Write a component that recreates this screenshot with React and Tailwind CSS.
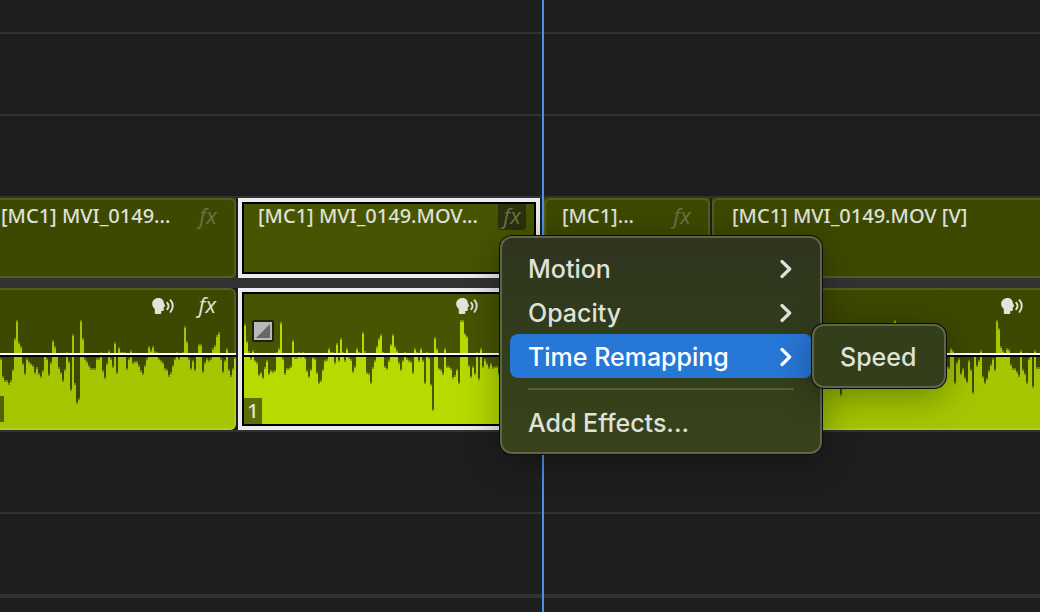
import React from "react";

const WAVE_A = [
  358, 376, 380, 380, 383, 380, 369, 338, 320, 342, 346, 363, 373, 358, 361, 363, 365, 372, 367, 373,
  376, 370, 355, 358, 374, 362, 340, 346, 355, 367, 372, 380, 369, 352, 361, 389, 334, 383, 402, 398,
  320, 338, 358, 361, 365, 368, 368, 368, 358, 358, 352, 370, 377, 363, 350, 358, 366, 342, 372, 347,
  352, 352, 352, 368, 358, 350, 362, 361, 361, 365, 370, 373, 365, 358, 346, 350, 346, 351, 352, 358,
  360, 362, 368, 369, 375, 372, 365, 358, 352, 358, 355, 352, 326, 341, 358, 368, 360, 369, 355, 344,
  344, 371, 362, 358, 360, 358, 348, 345, 335, 332, 358, 371, 360, 348, 369, 375, 368, 357,
];

const WAVE_B = [
  324, 341, 351, 358, 350, 360, 362, 374, 372, 377, 367, 360, 373, 370, 371, 370, 352, 348, 322, 358,
  373, 368, 368, 366, 340, 357, 357, 352, 356, 352, 357, 370, 376, 369, 357, 358, 372, 382, 380, 369,
  360, 359, 348, 352, 352, 362, 343, 360, 338, 352, 360, 348, 357, 359, 371, 366, 348, 352, 353, 332,
  351, 372, 373, 382, 367, 360, 346, 338, 334, 352, 366, 368, 360, 344, 334, 346, 350, 362, 369, 360,
  352, 358, 360, 361, 372, 348, 352, 360, 348, 360, 382, 352, 357, 384, 409, 337, 348, 368, 369, 373,
  348, 366, 366, 368, 377, 375, 369, 382, 320, 320, 333, 336, 365, 376, 366, 373, 352, 378, 348, 366,
  359, 363, 367, 363, 367, 366, 366, 373, 362, 360, 352, 358, 366, 370, 360, 352, 349, 358, 364, 371,
  360, 352, 358, 364, 362,
];

const WAVE_C = [
  360, 366, 352, 348, 360, 370, 365, 358, 352, 362, 368, 374, 361, 350, 345, 358, 366, 372, 360, 352,
  358, 366, 362, 350, 340, 356, 364, 370, 360, 352, 358, 366, 371, 362, 350, 346, 358, 368, 360, 352,
  358, 364, 370, 361, 352, 348, 358, 366, 372, 360, 350, 345, 352, 360, 366, 370, 361, 352, 358, 366,
  362, 350, 342, 356, 364, 370, 360, 352, 358, 366, 371, 362, 350, 346, 358, 368, 360, 352, 358, 364,
  370, 361, 352,
];

const WAVE_D = [
  360, 366, 352, 348, 360, 370, 365, 358, 352, 362, 368, 374, 361, 350, 345, 358, 366, 372, 360, 352,
  358, 366, 362, 350, 340, 356, 364, 370, 360, 352, 358, 366, 371, 362, 350, 346, 358, 368, 360, 352,
  358, 364, 370, 361, 352, 348, 358, 366, 372, 360, 350, 345, 352, 360, 366, 370, 361, 352, 358, 366,
  362, 350, 342, 356, 394, 370, 360, 352, 358, 366, 371, 362, 350, 346, 358, 368, 360, 352, 358, 364,
  370, 361, 352, 348, 360, 370, 365, 358, 352, 362, 368, 320, 361, 350, 345, 358, 366, 372, 360, 352,
  358, 366, 362, 350, 346, 356, 364, 370, 360, 352, 358, 366, 371, 362, 350, 356, 358, 366, 367, 348,
  350, 382, 362, 358, 373, 368, 377, 381, 360, 369, 392, 355, 365, 360, 350, 376, 382, 378, 370, 364,
  358, 369, 320, 328, 346, 350, 353, 348, 349, 364, 368, 368, 371, 375, 350, 369, 373, 382, 358, 355,
  386, 350, 367, 367,
];

const TRACK_TOP = 288;
const TRACK_HEIGHT = 142;

function outline(levels, drop) {
  const steps = levels
    .map((y, i) => `L${i * 2} ${y - TRACK_TOP + drop}H${i * 2 + 2}`)
    .join("");
  return `M0 ${TRACK_HEIGHT}${steps}V${TRACK_HEIGHT}Z`;
}

function Waveform({ levels, selected }) {
  return (
    <svg
      className="absolute inset-0 h-full w-full"
      viewBox={`0 0 ${levels.length * 2} ${TRACK_HEIGHT}`}
      preserveAspectRatio="none"
      shapeRendering="crispEdges"
      aria-hidden="true"
    >
      <path d={outline(levels, 0)} fill={selected ? "#7d9600" : "#708700"} />
      <path d={outline(levels, 2)} fill={selected ? "#b7da00" : "#a5c702"} />
    </svg>
  );
}

function SpeakingHead() {
  return (
    <svg width="23" height="18" viewBox="0 0 23 18" role="img" aria-label="Dialogue">
      <path
        d="M6.600 1C2.900 1 .2 3.500.2 6.700c0 2.200.9 3.500 2 4.600.5.500.6 1 .6 1.800v3c0 .6.300.9.900.9h4.700c.6 0 .9-.3.900-.9v-2h1c1 0 1.500-.5 1.500-1.300v-2.300c0-.4.200-.6.600-.7l.5-.2c.4-.2.500-.5.300-.9L11.900 6.300C11.800 3.200 9.700 1 6.600 1Z"
        fill="#e2e4da"
      />
      <g fill="none" stroke="#e2e4da" strokeWidth="1.900" strokeLinecap="round">
        <path d="M15.300 5.800c1.500 1.900 1.500 4.500 0 6.400" />
        <path d="M18.500 3.200c3 3.400 3 8.200 0 11.600" />
      </g>
    </svg>
  );
}

function Fx({ dim }) {
  return (
    <span
      className={`pb-1 font-['Open_Sans','Noto_Sans',sans-serif] text-[22px] leading-5 italic ${
        dim ? "text-[#6a7249]" : "text-[#e2e4da]"
      }`}
    >
      fx
    </span>
  );
}

const frames = {
  left: "rounded-r-md border-y-2 border-r-2 border-white/12",
  whole: "rounded-md border-2 border-white/12",
  open: "rounded-l-md border-y-2 border-l-2 border-white/12",
  selected: "border-4 border-[#ebebed] ring-2 ring-black ring-inset",
};

function VideoClip({ name, frame, width, pad, fx }) {
  const selected = frame === "selected";
  return (
    <article
      className={`relative flex h-20 items-start justify-between ${width} ${
        selected ? "bg-[#475402]" : "bg-[#3d4900]"
      }`}
    >
      <h3
        className={`pt-1 font-['Noto_Sans','Open_Sans',sans-serif] text-xl leading-7 font-medium whitespace-nowrap text-[#dfe0d8] ${pad}`}
      >
        {name}
      </h3>
      {fx && (
        <span
          className={`mt-1.5 mr-3.5 flex h-[26px] w-7 items-center justify-center ${
            selected ? "rounded-b bg-[#2b310d]" : ""
          }`}
        >
          <Fx dim />
        </span>
      )}
      <div className={`pointer-events-none absolute inset-0 ${frames[frame]}`} />
    </article>
  );
}

function AudioClip({ levels, frame, width, endPad, fx, children }) {
  const selected = frame === "selected";
  return (
    <article
      className={`relative flex h-[142px] flex-col justify-between overflow-hidden ${width} ${
        selected ? "bg-[#475402] p-1.5" : "bg-[#3d4900] py-1.5"
      } ${frame === "left" ? "rounded-r-md" : ""}`}
    >
      <div className={`absolute ${selected ? "inset-x-1.5 inset-y-0" : "inset-0"}`}>
        <Waveform levels={levels} selected={selected} />
      </div>
      <div className={`pointer-events-none absolute inset-0 ${frames[frame]}`} />
      <div
        className={`absolute top-[65px] h-1 border-t-2 border-white bg-black ${
          selected ? "inset-x-1.5" : "inset-x-0"
        }`}
      />
      <header className={`relative flex h-6 items-center justify-end gap-6 ${endPad}`}>
        <SpeakingHead />
        {fx && <Fx />}
      </header>
      {children}
    </article>
  );
}

function TransitionIcon() {
  return (
    <svg className="absolute top-8 left-3.5" width="22" height="22" viewBox="0 0 22 22" aria-hidden="true">
      <rect width="22" height="22" rx="2" fill="#1f2408" />
      <rect x="2" y="2" width="18" height="18" fill="#b9b9b9" />
      <path d="M18 4V18H4Z" fill="#686868" />
    </svg>
  );
}

function Chevron() {
  return (
    <svg width="12" height="20" viewBox="0 0 12 20" aria-hidden="true">
      <path
        d="M2 2.500 9.700 10 2 17.500"
        fill="none"
        stroke="currentColor"
        strokeWidth="3.200"
        strokeLinecap="round"
        strokeLinejoin="round"
      />
    </svg>
  );
}

const panel =
  "rounded-xl border-2 border-[#5d664a] p-2 shadow-[0_0_0_1px_#0b0d06,0_8px_36px_rgba(0,0,0,0.35)]";

function MenuItem({ label, submenu, active }) {
  return (
    <button
      type="button"
      role="menuitem"
      aria-haspopup={submenu ? "menu" : undefined}
      className={`flex h-11 w-full items-center justify-between rounded-lg pt-0.5 pr-5 pl-[18px] text-left text-[25px] leading-8 font-medium whitespace-nowrap ${
        active ? "bg-[#2777d6] text-white" : "text-[#dfe1da]"
      }`}
    >
      {label}
      {submenu && <Chevron />}
    </button>
  );
}

function EffectsMenu() {
  return (
    <div
      role="menu"
      aria-label="Clip effects"
      className={`absolute top-[236px] left-[500px] z-20 w-[322px] bg-linear-to-b from-[#2f331f] via-[#303b1c] via-35% to-[#39431a] font-['Inter',sans-serif] ${panel}`}
    >
      <MenuItem label="Motion" submenu />
      <MenuItem label="Opacity" submenu />
      <div className="relative">
        <MenuItem label="Time Remapping" submenu active />
        <div
          role="menu"
          aria-label="Time Remapping"
          className={`absolute -top-2.5 left-full w-[134px] bg-[#333e1b] ${panel}`}
        >
          <MenuItem label="Speed" />
        </div>
      </div>
      <hr className="mx-[18px] my-2.5 border-t-2 border-[#56603b]" />
      <MenuItem label="Add Effects..." />
    </div>
  );
}

export default function App() {
  return (
    <main className="relative flex min-h-screen flex-col overflow-hidden bg-[#1e1e1e]">
      <div className="h-[34px] border-b-2 border-[#323232]" />
      <div className="h-[82px] border-b-2 border-[#323232]" />
      <div className="h-[82px] border-b-2 border-[#323232]" />

      <section aria-label="Video track" className="flex border-b-10 border-[#323232]">
        <VideoClip name="[MC1] MVI_0149..." frame="left" width="w-[236px]" pad="pl-px" fx />
        <div className="w-0.5" />
        <VideoClip name="[MC1] MVI_0149.MOV..." frame="selected" width="w-[302px]" pad="pl-5" fx />
        <div className="w-1" />
        <VideoClip name="[MC1]..." frame="whole" width="w-[166px]" pad="pl-[18px]" fx />
        <div className="w-0.5" />
        <VideoClip name="[MC1] MVI_0149.MOV [V]" frame="open" width="flex-1" pad="pl-5" />
      </section>

      <section aria-label="Audio track" className="flex border-b-2 border-[#323232]">
        <AudioClip levels={WAVE_A} frame="left" width="w-[236px]" endPad="pr-5" fx>
          <span className="relative mb-0.5 h-[26px] w-1 bg-[#536204]" />
        </AudioClip>
        <div className="w-0.5" />
        <AudioClip levels={WAVE_B} frame="selected" width="w-[302px]" endPad="pr-3.5" fx>
          <TransitionIcon />
          <span className="relative flex h-[26px] w-[18px] items-center justify-center bg-[#5c6d04] font-['Noto_Sans',sans-serif] text-xl leading-7 font-medium text-[#e2e4da]">
            1
          </span>
        </AudioClip>
        <div className="w-1" />
        <AudioClip levels={WAVE_C} frame="whole" width="w-[166px]" endPad="pr-5" fx />
        <div className="w-0.5" />
        <AudioClip levels={WAVE_D} frame="open" width="flex-1" endPad="pr-4" />
      </section>

      <div className="h-[82px] border-b-2 border-[#323232]" />
      <div className="h-[84px] border-b-4 border-[#323232]" />

      <div className="absolute inset-y-0 left-[542px] z-10 w-0.5 bg-[#4792ea]" />
      <EffectsMenu />
    </main>
  );
}
